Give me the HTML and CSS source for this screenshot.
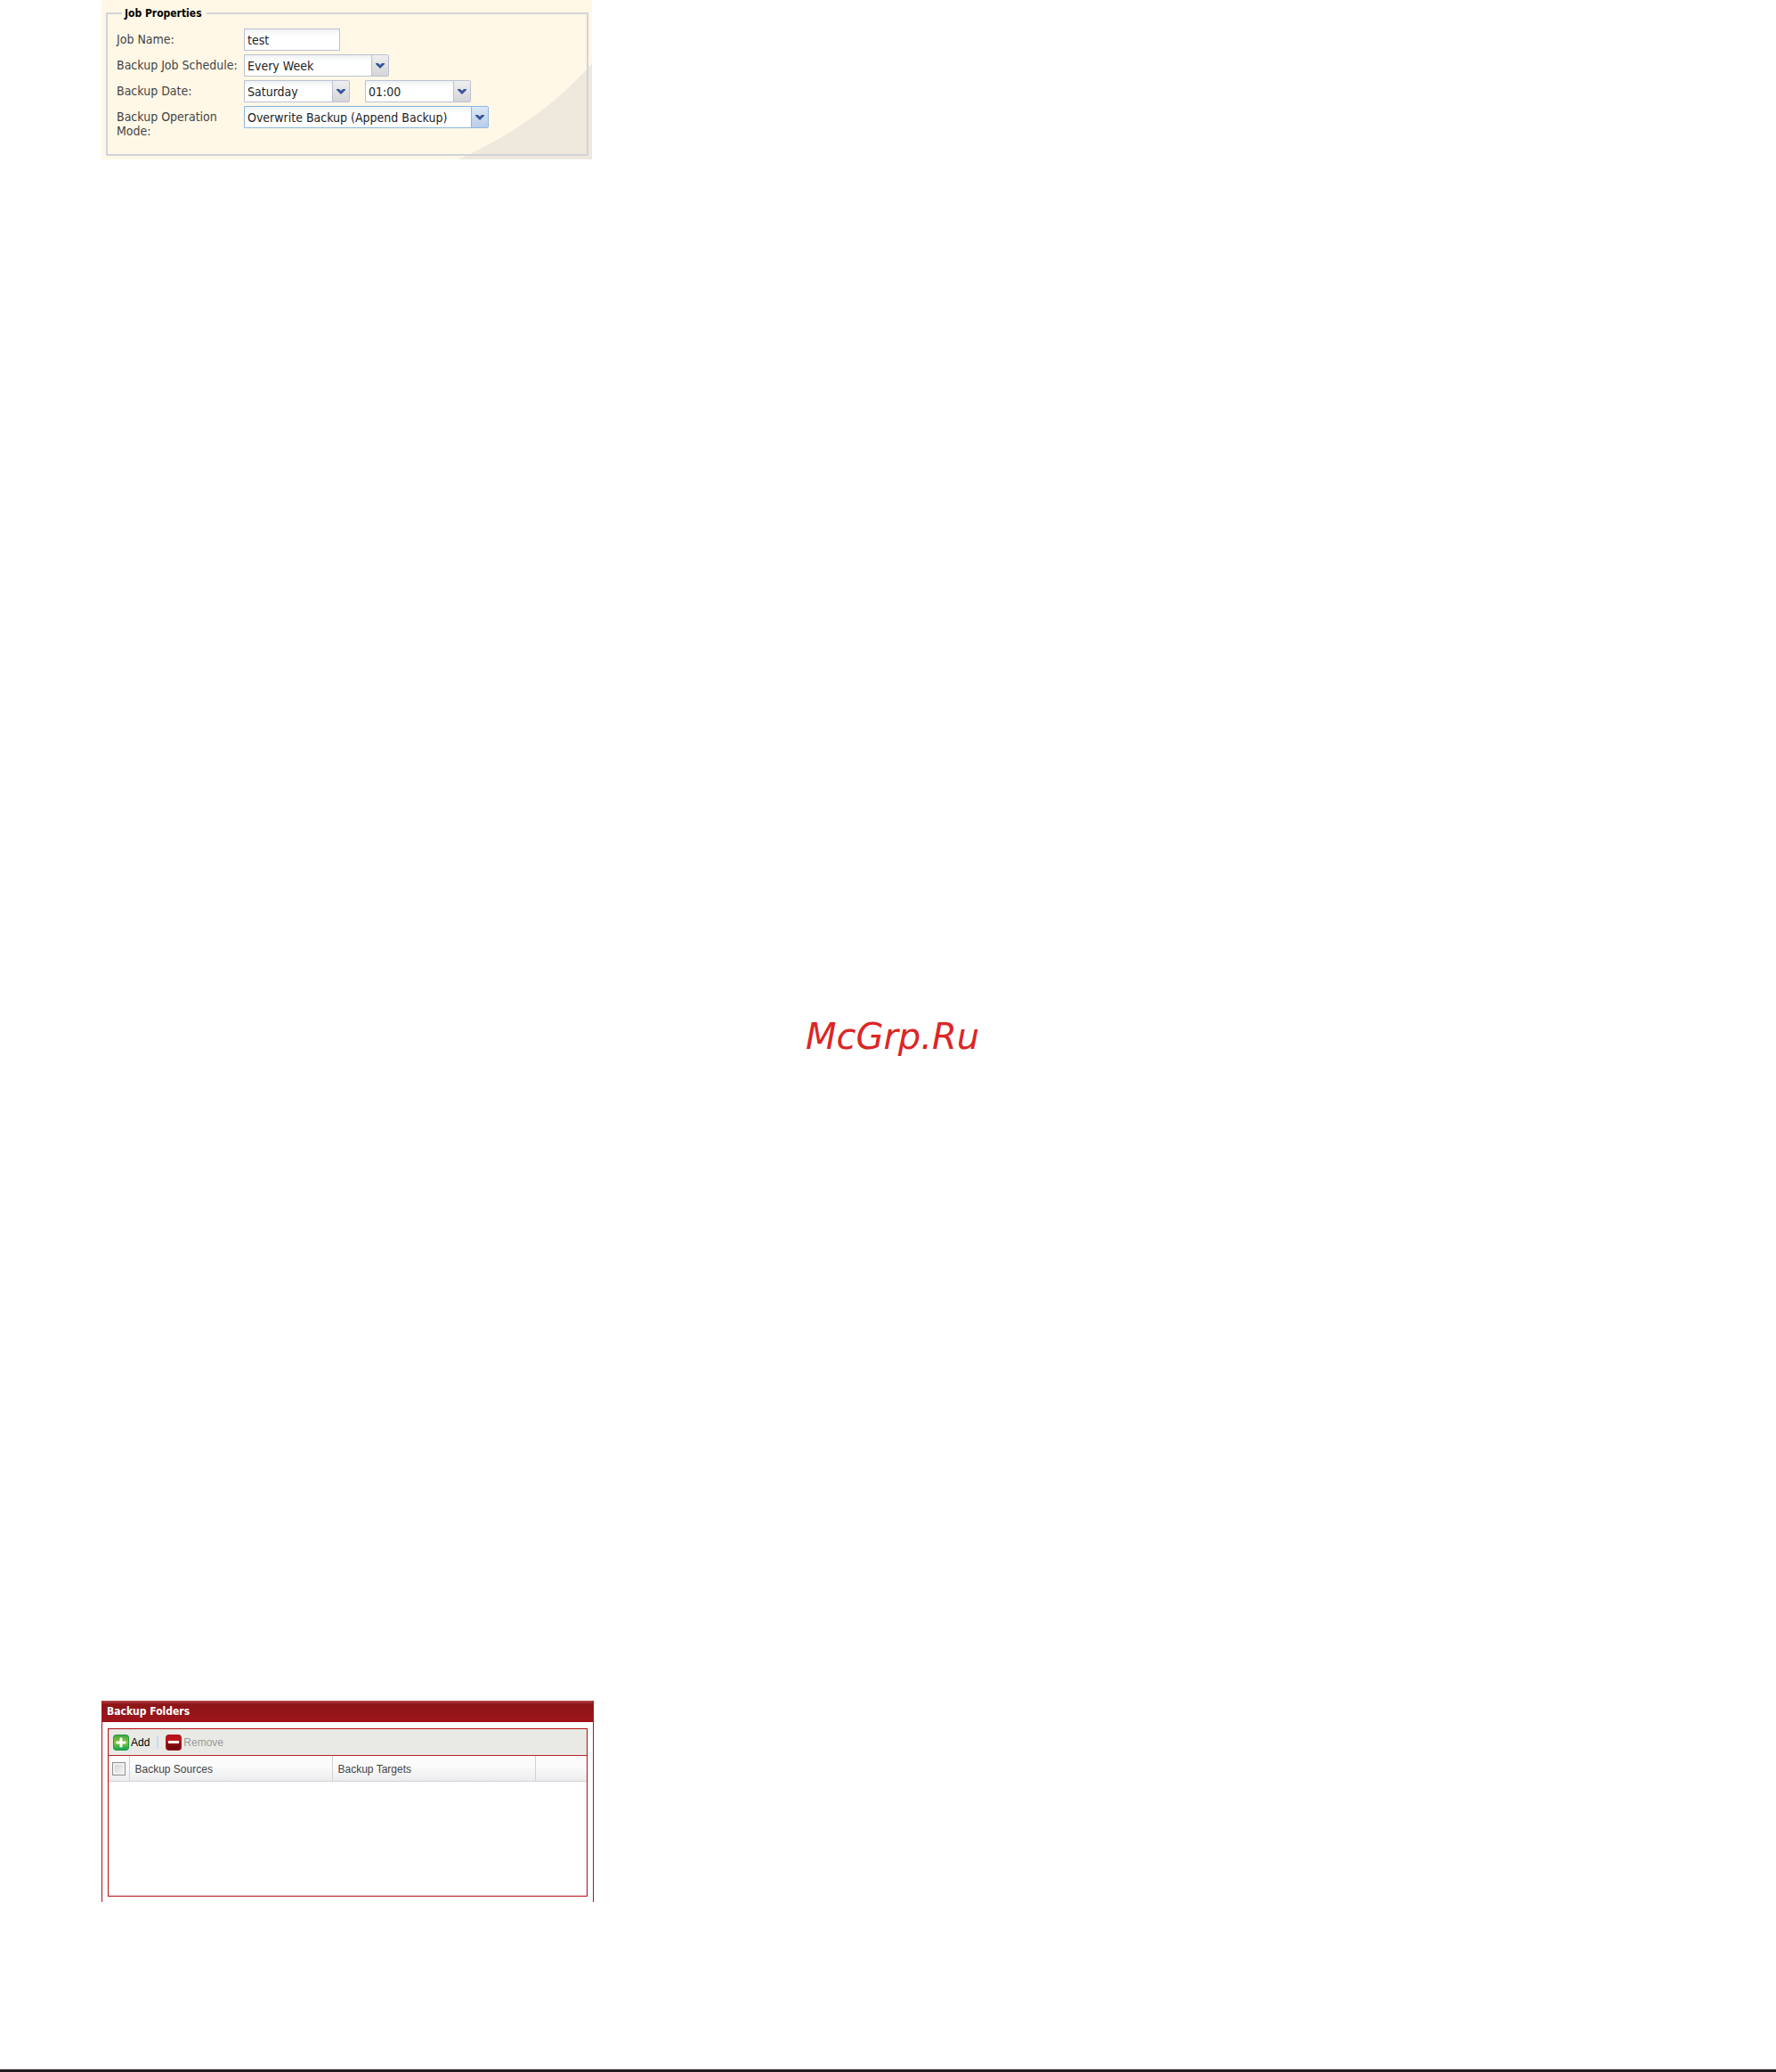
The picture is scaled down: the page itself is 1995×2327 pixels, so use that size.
FILE: index.html
```
<!DOCTYPE html>
<html lang="en">
<head>
  <meta charset="UTF-8">
  <title>Backup Job</title>
  <meta name="viewport" content="width=device-width, initial-scale=1.0">
  <link rel="stylesheet" href="styles.css">
</head>
<body>
  <form class="properties">
    <svg class="swoosh" viewBox="0 0 150 108" aria-hidden="true">
      <path d="M0 108 C55 83 108 49 150 0 V108 Z" fill="#efe8dd"/>
    </svg>
    <fieldset>
      <legend>Job Properties</legend>
      <div class="row">
        <label for="jobName">Job Name:</label>
        <input class="text" id="jobName" type="text" value="test">
      </div>
      <div class="row">
        <label for="schedule">Backup Job Schedule:</label>
        <div class="combo medium">
          <select id="schedule"><option>Every Week</option></select>
          <span class="arrow"><svg viewBox="0 0 10 6"><path d="M0 0h3l2 2 2-2h3v1L5 6 0 1z"/></svg></span>
        </div>
      </div>
      <div class="row">
        <label for="day">Backup Date:</label>
        <div class="combo small">
          <select id="day"><option>Saturday</option></select>
          <span class="arrow"><svg viewBox="0 0 10 6"><path d="M0 0h3l2 2 2-2h3v1L5 6 0 1z"/></svg></span>
        </div>
        <div class="combo small">
          <select id="time" aria-label="Backup time"><option>01:00</option></select>
          <span class="arrow"><svg viewBox="0 0 10 6"><path d="M0 0h3l2 2 2-2h3v1L5 6 0 1z"/></svg></span>
        </div>
      </div>
      <div class="row">
        <label for="mode">Backup Operation Mode:</label>
        <div class="combo large active">
          <select id="mode"><option>Overwrite Backup (Append Backup)</option></select>
          <span class="arrow"><svg viewBox="0 0 10 6"><path d="M0 0h3l2 2 2-2h3v1L5 6 0 1z"/></svg></span>
        </div>
      </div>
    </fieldset>
  </form>

  <div class="watermark">McGrp.Ru</div>

  <section class="folders">
    <h2>Backup Folders</h2>
    <div class="grid">
      <div class="toolbar">
        <button type="button">
          <svg viewBox="0 0 18 18">
            <defs>
              <linearGradient id="green" x1="0" y1="0" x2="0" y2="1">
                <stop offset="0" stop-color="#4aa543"/>
                <stop offset="0.5" stop-color="#8cc63f"/>
                <stop offset="1" stop-color="#12a552"/>
              </linearGradient>
            </defs>
            <rect width="18" height="18" rx="4" fill="#1f9a4a"/>
            <rect x="1" y="1" width="16" height="16" rx="3" fill="url(#green)"/>
            <path d="M8 4h2v4h4v2h-4v4H8v-4H4V8h4z" fill="#fff" stroke="#fff" stroke-width="1"/>
          </svg>
          Add
        </button>
        <span class="separator"></span>
        <button type="button" disabled>
          <svg viewBox="0 0 18 18">
            <defs>
              <linearGradient id="red" x1="0" y1="0" x2="0" y2="1">
                <stop offset="0" stop-color="#b3131b"/>
                <stop offset="0.5" stop-color="#c8161d"/>
                <stop offset="0.55" stop-color="#8a0c12"/>
                <stop offset="1" stop-color="#6d090e"/>
              </linearGradient>
            </defs>
            <rect width="18" height="18" rx="4" fill="#b0161d"/>
            <rect x="1" y="1" width="16" height="16" rx="3" fill="url(#red)"/>
            <rect x="3" y="7" width="12" height="3" fill="#fff"/>
          </svg>
          Remove
        </button>
      </div>
      <table>
        <thead>
          <tr>
            <th class="check"><input type="checkbox" aria-label="Select all folders"></th>
            <th class="path">Backup Sources</th>
            <th class="path">Backup Targets</th>
            <th></th>
          </tr>
        </thead>
        <tbody></tbody>
      </table>
    </div>
  </section>
</body>
</html>
```
FILE: styles.css
```
* {
  box-sizing: border-box;
}
body {
  margin: 0;
  min-height: 100vh;
  background: #fff;
  border-bottom: 3px solid #231f20;
  font-family: "DejaVu Sans Condensed", "DejaVu Sans", sans-serif;
  font-size: 14px;
  color: #444;
  display: flex;
  flex-direction: column;
  align-items: flex-start;
  padding: 0 114px 188px;
}

/* job form */
.properties {
  position: relative;
  width: 551px;
  max-width: 100%;
  padding: 7px 4px 4px 5px;
  background: #fff8e7;
}
.swoosh {
  position: absolute;
  right: 0;
  bottom: 0;
  width: 150px;
}
fieldset {
  position: relative;
  margin: 0;
  padding: 9px 10px 25px;
  border: 2px solid #d2d3da;
}
legend {
  margin-left: 6px;
  padding: 0 5px 0 3px;
  font-size: 12px;
  font-weight: bold;
  line-height: 16px;
  color: #000;
}
.row {
  display: flex;
  align-items: flex-start;
  height: 29px;
}
.row label {
  width: 143px;
  padding-top: 4px;
  line-height: 16px;
}
.text,
.combo {
  height: 25px;
  border: 1px solid #bcc0d2;
  background: linear-gradient(#eef1f2, #fff 7px);
}
.text {
  width: 108px;
  padding: 0 3px;
  font: inherit;
  color: #222;
}
.combo {
  display: flex;
  margin-right: 17px;
  border-radius: 0 2px 2px 0;
}
.combo select {
  flex: 1;
  min-width: 0;
  padding: 0 3px;
  border: none;
  background: none;
  appearance: none;
  font: inherit;
  color: #222;
}
.arrow {
  width: 19px;
  display: flex;
  align-items: center;
  justify-content: center;
  border-left: 1px solid #bcc0d2;
  background: linear-gradient(#efefef, #d5d5d7);
  pointer-events: none;
}
.arrow svg {
  width: 10px;
  fill: #36549a;
}
.small {
  width: 119px;
}
.medium {
  width: 163px;
}
.large {
  width: 275px;
}
.active,
.active .arrow {
  border-color: #8ab8e0;
}
.active .arrow {
  background: linear-gradient(#dbe7f5, #b9cdea);
}

.watermark {
  position: absolute;
  top: 50%;
  left: 50%;
  transform: translate(-50%, -50%);
  padding-left: 10px;
  font-family: "DejaVu Sans", sans-serif;
  font-size: 40px;
  font-style: italic;
  color: #dc2626;
}

/* folder grid */
.folders {
  width: 553px;
  max-width: 100%;
  margin-top: auto;
  padding-bottom: 6px;
  border: solid #a5161b;
  border-width: 0 1px;
}
h2 {
  margin: 0 0 7px;
  padding: 0 5px;
  font-size: 12px;
  line-height: 24px;
  color: #fff;
  background: linear-gradient(#b8484b, #8c1518 4px, #9c151b 22px, #a40a10);
}
.grid {
  height: 189px;
  margin: 0 6px;
  border: 1px solid #b20d12;
  font-family: "Liberation Sans", Arial, sans-serif;
  font-size: 12px;
}
.toolbar {
  display: flex;
  align-items: center;
  height: 30px;
  padding: 0 5px;
  background: #e9eae5;
  border-bottom: 1px solid #b8252a;
}
.toolbar button {
  display: flex;
  align-items: center;
  gap: 2px;
  padding: 0;
  border: none;
  background: none;
  font: inherit;
  color: #000;
}
.toolbar button:disabled {
  color: #999;
}
.toolbar svg {
  width: 18px;
  height: 18px;
}
.separator {
  width: 2px;
  height: 15px;
  margin: 0 8px;
  background: #c5dcf3;
}
table {
  width: 100%;
  border-collapse: collapse;
  table-layout: fixed;
}
th {
  height: 28px;
  padding: 2px 6px 0;
  background: linear-gradient(#fbfbfb 40%, #ebecee);
  border-right: 1px solid #d2d2d2;
  border-bottom: 1px solid #d2d2d2;
  font-weight: normal;
  text-align: left;
}
th:last-child {
  border-right: none;
}
.check {
  width: 23px;
  padding: 2px 4px 0;
}
.path {
  width: 228px;
}
.check input {
  display: block;
  width: 15px;
  height: 15px;
  margin: 0;
  appearance: none;
  border: 1px solid #8e8f8f;
  background: linear-gradient(135deg, #cfd3d8, #f6f6f6);
  box-shadow: inset 0 0 0 2px #f2f2f2;
}
```
